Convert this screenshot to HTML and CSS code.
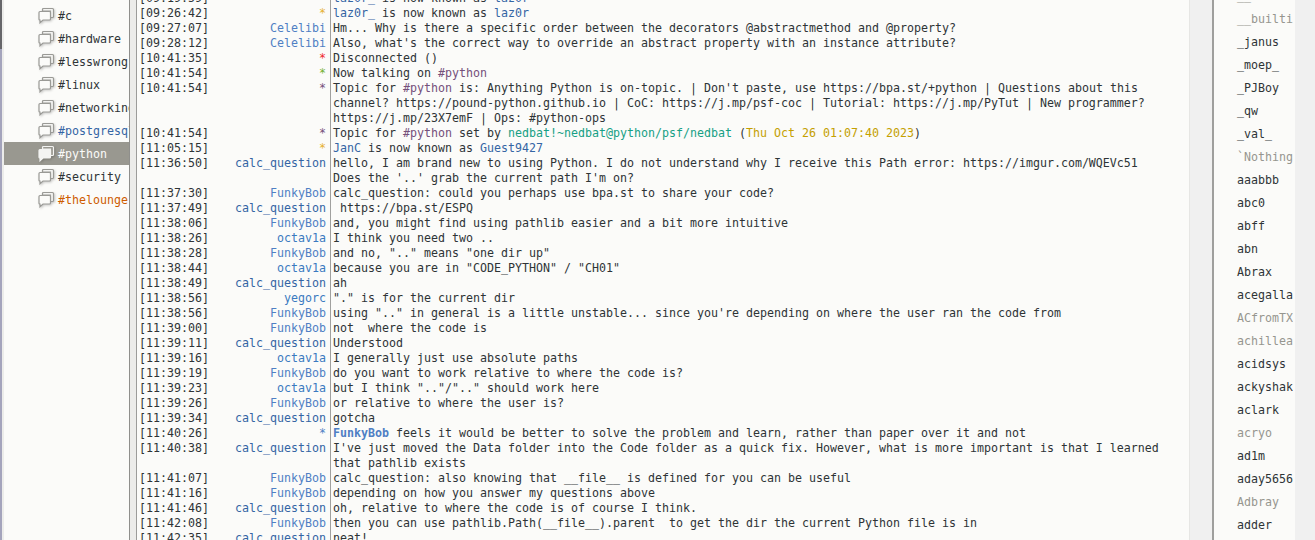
FILE: index.html
```html
<!DOCTYPE html>
<html>
<head>
  <title>HexChat</title>
  <link rel="stylesheet" href="styles.css">
</head>
<body>
  <svg class="defs" width="0" height="0">
    <symbol id="bubbles" viewBox="0 0 17 17">
      <path class="back" d="M4.5 4 V2.5 Q4.5 1.5 5.5 1.5 H14.5 Q15.5 1.5 15.5 2.5 V9.5 Q15.5 10.5 14.5 10.5 H12.5 V4 Z"/>
      <path class="front" d="M2 4.5 H11.5 Q12.5 4.5 12.5 5.5 V12 Q12.5 13 11.5 13 H5 L2 15.8 V13 Q1 13 1 12 V5.5 Q1 4.5 2 4.5 Z"/>
    </symbol>
  </svg>
  <div class="app">
    <div class="edge"></div>
    <ul class="channels">
      <li><svg class="bubble"><use href="#bubbles"/></svg>#c</li>
      <li><svg class="bubble"><use href="#bubbles"/></svg>#hardware</li>
      <li><svg class="bubble"><use href="#bubbles"/></svg>#lesswrong</li>
      <li><svg class="bubble"><use href="#bubbles"/></svg>#linux</li>
      <li><svg class="bubble"><use href="#bubbles"/></svg>#networking</li>
      <li class="unread"><svg class="bubble"><use href="#bubbles"/></svg>#postgresql</li>
      <li class="active"><svg class="bubble"><use href="#bubbles"/></svg>#python</li>
      <li><svg class="bubble"><use href="#bubbles"/></svg>#security</li>
      <li class="hilight"><svg class="bubble"><use href="#bubbles"/></svg>#thelounge</li>
    </ul>
    <div class="gutter"></div>
    <div class="chat">
      <div class="line"><span class="time">[09:19:59]</span><span class="nick yellow">*</span><span class="text"><span class="blue">laz0r_</span> is now known as <span class="blue">laz0r</span></span></div>
      <div class="line"><span class="time">[09:26:42]</span><span class="nick yellow">*</span><span class="text"><span class="blue">laz0r_</span> is now known as <span class="blue">laz0r</span></span></div>
      <div class="line"><span class="time">[09:27:07]</span><span class="nick sky">Celelibi</span><span class="text">Hm... Why is there a specific order between the decorators @abstractmethod and @property?</span></div>
      <div class="line"><span class="time">[09:28:12]</span><span class="nick sky">Celelibi</span><span class="text">Also, what's the correct way to override an abstract property with an instance attribute?</span></div>
      <div class="line"><span class="time">[10:41:35]</span><span class="nick red">*</span><span class="text">Disconnected ()</span></div>
      <div class="line"><span class="time">[10:41:54]</span><span class="nick green">*</span><span class="text">Now talking on <span class="purple">#python</span></span></div>
      <div class="line"><span class="time">[10:41:54]</span><span class="nick purple">*</span><span class="text">Topic for <span class="purple">#python</span> is: Anything Python is on-topic. | Don't paste, use https://bpa.st/+python | Questions about this channel? https://pound-python.github.io | CoC: https://j.mp/psf-coc | Tutorial: https://j.mp/PyTut | New programmer? https://j.mp/23X7emF | Ops: #python-ops</span></div>
      <div class="line"><span class="time">[10:41:54]</span><span class="nick purple">*</span><span class="text">Topic for <span class="purple">#python</span> set by <span class="teal">nedbat!~nedbat@python/psf/nedbat</span> (<span class="gold">Thu Oct 26 01:07:40 2023</span>)</span></div>
      <div class="line"><span class="time">[11:05:15]</span><span class="nick yellow">*</span><span class="text"><span class="blue">JanC</span> is now known as <span class="blue">Guest9427</span></span></div>
      <div class="line"><span class="time">[11:36:50]</span><span class="nick blue">calc_question</span><span class="text">hello, I am brand new to using Python. I do not understand why I receive this Path error: https://imgur.com/WQEVc51 Does the '..' grab the current path I'm on?</span></div>
      <div class="line"><span class="time">[11:37:30]</span><span class="nick sky">FunkyBob</span><span class="text">calc_question: could you perhaps use bpa.st to share your code?</span></div>
      <div class="line"><span class="time">[11:37:49]</span><span class="nick blue">calc_question</span><span class="text"> https://bpa.st/ESPQ</span></div>
      <div class="line"><span class="time">[11:38:06]</span><span class="nick sky">FunkyBob</span><span class="text">and, you might find using pathlib easier and a bit more intuitive</span></div>
      <div class="line"><span class="time">[11:38:26]</span><span class="nick azure">octav1a</span><span class="text">I think you need two ..</span></div>
      <div class="line"><span class="time">[11:38:28]</span><span class="nick sky">FunkyBob</span><span class="text">and no, ".." means "one dir up"</span></div>
      <div class="line"><span class="time">[11:38:44]</span><span class="nick azure">octav1a</span><span class="text">because you are in "CODE_PYTHON" / "CH01"</span></div>
      <div class="line"><span class="time">[11:38:49]</span><span class="nick blue">calc_question</span><span class="text">ah</span></div>
      <div class="line"><span class="time">[11:38:56]</span><span class="nick azure">yegorc</span><span class="text">"." is for the current dir</span></div>
      <div class="line"><span class="time">[11:38:56]</span><span class="nick sky">FunkyBob</span><span class="text">using ".." in general is a little unstable... since you're depending on where the user ran the code from</span></div>
      <div class="line"><span class="time">[11:39:00]</span><span class="nick sky">FunkyBob</span><span class="text">not  where the code is</span></div>
      <div class="line"><span class="time">[11:39:11]</span><span class="nick blue">calc_question</span><span class="text">Understood</span></div>
      <div class="line"><span class="time">[11:39:16]</span><span class="nick azure">octav1a</span><span class="text">I generally just use absolute paths</span></div>
      <div class="line"><span class="time">[11:39:19]</span><span class="nick sky">FunkyBob</span><span class="text">do you want to work relative to where the code is?</span></div>
      <div class="line"><span class="time">[11:39:23]</span><span class="nick azure">octav1a</span><span class="text">but I think ".."/".." should work here</span></div>
      <div class="line"><span class="time">[11:39:26]</span><span class="nick sky">FunkyBob</span><span class="text">or relative to where the user is?</span></div>
      <div class="line"><span class="time">[11:39:34]</span><span class="nick blue">calc_question</span><span class="text">gotcha</span></div>
      <div class="line"><span class="time">[11:40:26]</span><span class="nick sky">*</span><span class="text"><b class="sky">FunkyBob</b> feels it would be better to solve the problem and learn, rather than paper over it and not</span></div>
      <div class="line"><span class="time">[11:40:38]</span><span class="nick blue">calc_question</span><span class="text">I've just moved the Data folder into the Code folder as a quick fix. However, what is more important is that I learned that pathlib exists</span></div>
      <div class="line"><span class="time">[11:41:07]</span><span class="nick sky">FunkyBob</span><span class="text">calc_question: also knowing that __file__ is defined for you can be useful</span></div>
      <div class="line"><span class="time">[11:41:16]</span><span class="nick sky">FunkyBob</span><span class="text">depending on how you answer my questions above</span></div>
      <div class="line"><span class="time">[11:41:46]</span><span class="nick blue">calc_question</span><span class="text">oh, relative to where the code is of course I think.</span></div>
      <div class="line"><span class="time">[11:42:08]</span><span class="nick sky">FunkyBob</span><span class="text">then you can use pathlib.Path(__file__).parent  to get the dir the current Python file is in</span></div>
      <div class="line"><span class="time">[11:42:35]</span><span class="nick blue">calc_question</span><span class="text">neat!</span></div>
    </div>
    <div class="rail"></div>
    <ul class="users">
      <li class="away">__</li>
      <li class="away">__builtins__</li>
      <li>_janus</li>
      <li>_moep_</li>
      <li>_PJBoy</li>
      <li>_qw</li>
      <li>_val_</li>
      <li class="away">`Nothing4You</li>
      <li>aaabbb</li>
      <li>abc0</li>
      <li>abff</li>
      <li>abn</li>
      <li>Abrax</li>
      <li>acegallagher</li>
      <li class="away">ACfromTX</li>
      <li class="away">achilleas</li>
      <li>acidsys</li>
      <li>ackyshake</li>
      <li>aclark</li>
      <li class="away">acryo</li>
      <li>ad1m</li>
      <li>aday5656</li>
      <li class="away">Adbray</li>
      <li>adder</li>
    </ul>
    <div class="rail-end"></div>
  </div>
</body>
</html>
```

FILE: styles.css
```css
html, body {
  margin: 0;
  height: 100%;
  overflow: hidden;
}

body {
  font-family: "DejaVu Sans Mono", monospace;
  font-size: 11.63px;
  color: #2e3436;
  background: #fbfbf9;
}

.defs {
  display: block;
}

ul {
  list-style: none;
  margin: 0;
  padding: 0;
}

.app {
  display: flex;
  height: 540px;
  overflow: hidden;
}

.edge {
  width: 2px;
  flex: none;
  background: linear-gradient(#66666a 49px, #a4a4bc 49px);
  border-right: 2px solid #ececea;
}

.channels {
  width: 125px;
  flex: none;
  padding-top: 4px;
  overflow: hidden;
}

.channels li {
  display: flex;
  align-items: center;
  gap: 3px;
  height: 23px;
  padding-left: 34px;
  white-space: nowrap;
  overflow: hidden;
}

.bubble {
  width: 17px;
  height: 17px;
  flex: none;
  --bubble-line: #9a9a96;
  --bubble-back: #f4f4f2;
  --bubble-front: #fbfbf9;
  filter: drop-shadow(1px 1px 1px rgba(0, 0, 0, 0.2));
}

.back,
.front {
  stroke: var(--bubble-line);
  stroke-width: 1.2;
}

.back {
  fill: var(--bubble-back);
}

.front {
  fill: var(--bubble-front);
}

.channels .unread {
  color: #3465a4;
}

.channels .hilight {
  color: #ce5c00;
}

.channels .active {
  background: #999890;
  color: #fbfbf9;
}

.channels .active .bubble {
  --bubble-line: #f4f4f2;
  --bubble-back: #999890;
  --bubble-front: #f4f4f2;
}

.gutter {
  width: 6px;
  flex: none;
  background: #ececea;
  border-left: 1px solid #8f8f8c;
  border-right: 1px solid #9c9c9a;
}

.chat {
  width: 1052px;
  flex: none;
  margin-top: -9px;
}

.line {
  display: flex;
  line-height: 15px;
}

.time {
  width: 68px;
  flex: none;
  margin-left: 2px;
}

.nick {
  width: 119px;
  flex: none;
  text-align: right;
  padding-right: 4px;
}

.text {
  flex: 1;
  border-left: 1px solid #a0a09e;
  padding-left: 2px;
  padding-right: 25px;
  white-space: pre-wrap;
}

.blue { color: #3465a4; }
.sky { color: #4f7fc4; }
.azure { color: #3a7ac0; }
.yellow { color: #e6b030; }
.red { color: #ef2929; }
.green { color: #73b030; }
.purple { color: #75507b; }
.teal { color: #16a085; }
.gold { color: #c4a000; }

.rail {
  flex: 1;
  background: #f0f0f0;
  border-left: 1px solid #e6e6e4;
  border-right: 2px solid #9f9f9d;
}

.users {
  width: 79px;
  flex: none;
  margin-top: -15px;
  border-right: 2px solid #fbfbf9;
  overflow: hidden;
}

.users li {
  height: 23px;
  line-height: 23px;
  padding-left: 23px;
  white-space: nowrap;
}

.users .away {
  color: #96968f;
}

.rail-end {
  width: 20px;
  flex: none;
  background: #f0f0f0;
}
```
